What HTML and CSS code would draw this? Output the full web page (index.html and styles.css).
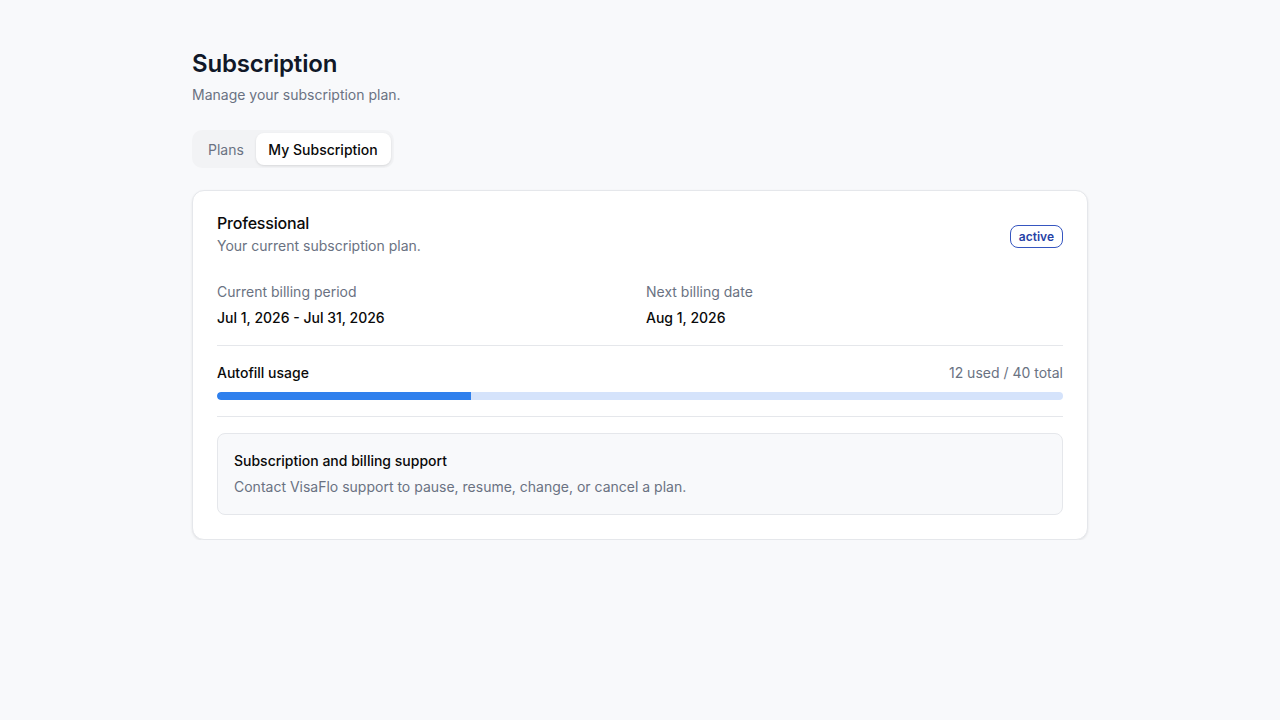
FILE: index.html
```html
<!DOCTYPE html>
<html lang="en">
<head>
<meta charset="utf-8">
<title>Subscription</title>
<link rel="stylesheet" href="styles.css">
</head>
<body>
<main class="page">
  <header class="page-head">
    <h1 class="page-title">Subscription</h1>
    <p class="page-sub">Manage your subscription plan.</p>
  </header>

  <div class="tabs">
    <button class="tab">Plans</button>
    <button class="tab tab-active">My Subscription</button>
  </div>

  <section class="card">
    <div class="card-head">
      <div>
        <h2 class="plan-name">Professional</h2>
        <p class="plan-sub">Your current subscription plan.</p>
      </div>
      <span class="badge">active</span>
    </div>

    <div class="billing">
      <div class="field">
        <div class="field-label">Current billing period</div>
        <div class="field-value">Jul 1, 2026 - Jul 31, 2026</div>
      </div>
      <div class="field">
        <div class="field-label">Next billing date</div>
        <div class="field-value">Aug 1, 2026</div>
      </div>
    </div>

    <div class="usage">
      <div class="usage-row">
        <span class="usage-title">Autofill usage</span>
        <span class="usage-count">12 used / 40 total</span>
      </div>
      <div class="bar"><div class="bar-fill" style="width: 30%"></div></div>
    </div>

    <div class="support">
      <div class="support-title">Subscription and billing support</div>
      <div class="support-text">Contact VisaFlo support to pause, resume, change, or cancel a plan.</div>
    </div>
  </section>
</main>
</body>
</html>
```

FILE: styles.css
```css
* { box-sizing: border-box; }
html, body { margin: 0; padding: 0; }
body {
  background: #f8f9fb;
  font-family: Inter, "Noto Sans", sans-serif;
  color: #0a0a0a;
  -webkit-font-smoothing: antialiased;
}
.page {
  max-width: 896px;
  margin: 0 auto;
  padding-top: 48px;
}
.page-title {
  margin: 0;
  font-size: 24px;
  line-height: 32px;
  font-weight: 600;
  color: #101828;
  letter-spacing: -0.2px;
}
.page-sub {
  margin: 5px 0 0;
  font-size: 14px;
  line-height: 20px;
  color: #6a7282;
}
.tabs {
  margin-top: 25px;
  display: inline-flex;
  align-items: center;
  height: 38px;
  padding: 3px;
  background: #f2f3f5;
  border-radius: 10px;
}
.tab {
  height: 100%;
  padding: 0 12.5px 0 13px;
  border: 0;
  background: transparent;
  font-family: inherit;
  font-size: 14px;
  font-weight: 400;
  color: #6a7282;
  border-radius: 8px;
}
.tab-active {
  padding: 0 13px 0 12px;
  background: #fff;
  color: #0a0a0a;
  font-weight: 500;
  box-shadow: 0 1px 3px rgba(0,0,0,0.08), 0 1px 2px rgba(0,0,0,0.04);
}
.card {
  margin-top: 22px;
  background: #fff;
  border: 1px solid #e5e7eb;
  border-radius: 12px;
  box-shadow: 0 1px 3px rgba(0,0,0,0.06), 0 1px 2px rgba(0,0,0,0.03);
  padding: 20px 24px 24px;
}
.card-head {
  display: flex;
  align-items: center;
  justify-content: space-between;
}
.plan-name {
  margin: 0;
  font-size: 16px;
  line-height: 24px;
  font-weight: 500;
  color: #0a0a0a;
  letter-spacing: -0.2px;
}
.plan-sub {
  margin: 1px 0 0;
  font-size: 14px;
  line-height: 20px;
  color: #6a7282;
}
.badge {
  margin-top: 6px;
  display: inline-flex;
  align-items: center;
  height: 23px;
  padding: 0 8px;
  border: 1px solid #3656c0;
  border-radius: 8px;
  font-size: 12px;
  font-weight: 600;
  color: #2742a6;
}
.billing {
  margin-top: 26px;
  display: grid;
  grid-template-columns: 1fr 1fr;
  column-gap: 12px;
  padding-bottom: 17px;
  border-bottom: 1px solid #e5e7eb;
}
.field-label {
  font-size: 14px;
  line-height: 20px;
  color: #6a7282;
}
.field-value {
  margin-top: 6px;
  font-size: 14px;
  line-height: 20px;
  font-weight: 500;
  color: #0a0a0a;
}
.usage {
  padding: 17px 0 16px;
  border-bottom: 1px solid #e5e7eb;
}
.usage-row {
  display: flex;
  justify-content: space-between;
  align-items: center;
  font-size: 14px;
  line-height: 20px;
}
.usage-title { font-weight: 500; color: #0a0a0a; }
.usage-count { color: #6a7282; }
.bar {
  margin-top: 9px;
  height: 8px;
  background: #d5e3fb;
  border-radius: 999px;
  overflow: hidden;
}
.bar-fill {
  height: 100%;
  background: #2f80ed;
  border-radius: 999px 0 0 999px;
}
.support {
  margin-top: 16px;
  background: #f8f9fb;
  border: 1px solid #e5e7eb;
  border-radius: 8px;
  padding: 17px 16px 17px;
}
.support-title {
  font-size: 14px;
  line-height: 20px;
  font-weight: 500;
  color: #0a0a0a;
}
.support-text {
  margin-top: 6px;
  font-size: 14px;
  line-height: 20px;
  color: #6a7282;
}
```
